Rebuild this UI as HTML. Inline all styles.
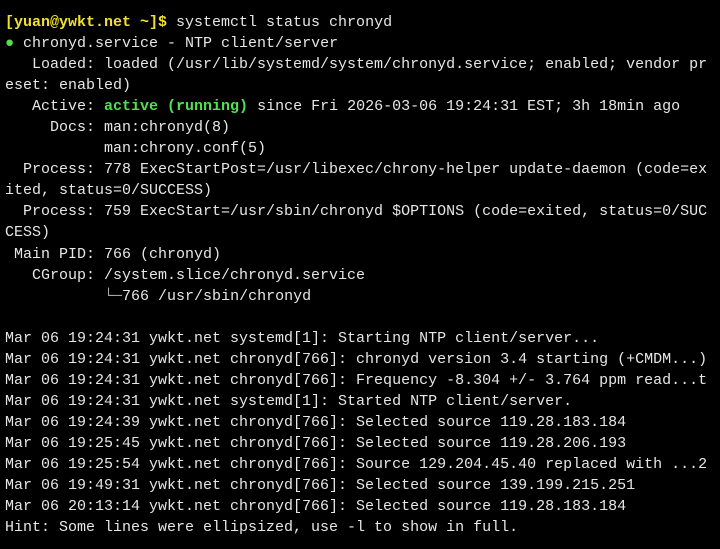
<!DOCTYPE html>
<html><head><meta charset="utf-8"><style>
html,body{margin:0;padding:0;background:#000;width:720px;height:549px;overflow:hidden}
pre{margin:0;padding:12px 0 0 5px;font-family:"Liberation Mono","DejaVu Sans Mono",monospace;font-size:15px;line-height:21.05px;color:#e6e6e6;white-space:pre}
.y{color:#f0e030;font-weight:bold}.g{color:#50e050;font-weight:bold}.d{color:#a8a8a8}
</style></head><body><pre><span class="y">[yuan@ywkt.net ~]$</span> systemctl status chronyd
<span style="color:#50e050">●</span> chronyd.service - NTP client/server
   Loaded: loaded (/usr/lib/systemd/system/chronyd.service; enabled; vendor pr
eset: enabled)
   Active: <span class="g">active (running)</span> since Fri 2026-03-06 19:24:31 EST; 3h 18min ago
     Docs: man:chronyd(8)
           man:chrony.conf(5)
  Process: 778 ExecStartPost=/usr/libexec/chrony-helper update-daemon (code=ex
ited, status=0/SUCCESS)
  Process: 759 ExecStart=/usr/sbin/chronyd $OPTIONS (code=exited, status=0/SUC
CESS)
 Main PID: 766 (chronyd)
   CGroup: /system.slice/chronyd.service
           <span class="d">└─</span>766 /usr/sbin/chronyd

Mar 06 19:24:31 ywkt.net systemd[1]: Starting NTP client/server...
Mar 06 19:24:31 ywkt.net chronyd[766]: chronyd version 3.4 starting (+CMDM...)
Mar 06 19:24:31 ywkt.net chronyd[766]: Frequency -8.304 +/- 3.764 ppm read...t
Mar 06 19:24:31 ywkt.net systemd[1]: Started NTP client/server.
Mar 06 19:24:39 ywkt.net chronyd[766]: Selected source 119.28.183.184
Mar 06 19:25:45 ywkt.net chronyd[766]: Selected source 119.28.206.193
Mar 06 19:25:54 ywkt.net chronyd[766]: Source 129.204.45.40 replaced with ...2
Mar 06 19:49:31 ywkt.net chronyd[766]: Selected source 139.199.215.251
Mar 06 20:13:14 ywkt.net chronyd[766]: Selected source 119.28.183.184
Hint: Some lines were ellipsized, use -l to show in full.</pre></body></html>
